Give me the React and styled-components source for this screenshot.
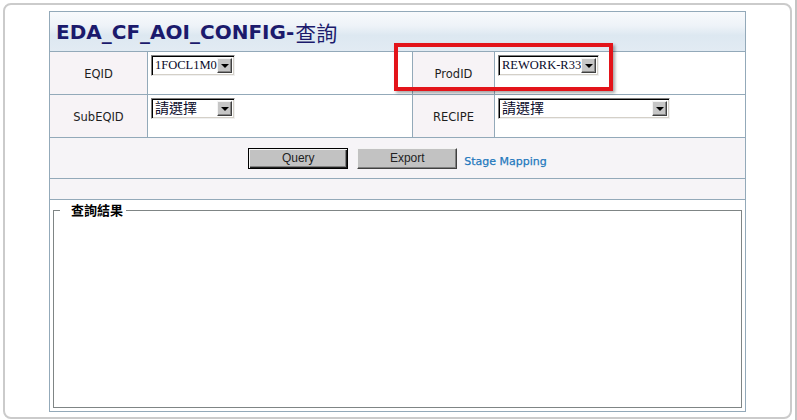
import React from "react";
import styled, { createGlobalStyle } from "styled-components";

const Global = createGlobalStyle`
  html, body { margin: 0; padding: 0; background: #ffffff; }
  body { width: 797px; height: 420px; overflow: hidden; font-family: "DejaVu Sans", Verdana, sans-serif; }
`;

const Page = styled.div`
  display: flex;
  align-items: flex-start;
  width: 797px;
  height: 420px;
`;

const Frame = styled.div`
  box-sizing: border-box;
  margin: 3px 0 0 3px;
  width: 790px;
  height: 416px;
  border: 2px solid #cbcbcb;
  border-radius: 8px;
  background: #ffffff;
  padding: 6px 0 0 44px;
`;

const EdgeStrip = styled.div`
  margin-left: 3px;
  width: 2px;
  height: 420px;
  background: #c4c4c4;
`;

const Panel = styled.div`
  position: relative;
  display: grid;
  grid-template-columns: 97px 264px 81px 250px;
  grid-template-rows: 39px 42px 42px 40px 20px 211px;
  gap: 1px;
  width: max-content;
  background: #93a9b9;
  border: 1px solid #93a9b9;
`;

const TitleCell = styled.div`
  grid-column: 1 / -1;
  display: flex;
  align-items: center;
  padding-left: 6px;
  background: linear-gradient(#f8fafc 0%, #eef3f8 35%, #dde8f1 60%, #e2ebf3 100%);
  color: #1b1a6c;
  font-family: "DejaVu Sans", Verdana, sans-serif;
  font-weight: bold;
  font-size: 20px;
  white-space: nowrap;
`;

const TitleCjk = styled.span`
  font-family: "Noto Sans CJK TC", "Noto Sans CJK SC", sans-serif;
  font-weight: normal;
  font-size: 21px;
  margin-left: 1px;
`;

const LabelCell = styled.div`
  display: flex;
  align-items: center;
  justify-content: center;
  background: #f7f3f6;
  color: #1e1e1e;
  font-size: 11.5px;
  font-family: "DejaVu Sans", Verdana, sans-serif;
  padding-top: 1px;
`;

const ValueCell = styled.div`
  background: #ffffff;
  padding: 3px 0 0 3px;
`;

const SelectBox = styled.div`
  box-sizing: border-box;
  display: flex;
  align-items: center;
  width: ${(p) => p.$w}px;
  height: 21px;
  background: #ffffff;
  border: 1px solid;
  border-color: #808080 #f0f0f0 #f0f0f0 #808080;
  box-shadow: inset 1px 1px 0 #000000, inset -1px -1px 0 #d4d0c8;
  padding: 0 2px 0 3px;
`;

const SelectText = styled.span`
  flex: 1;
  white-space: nowrap;
  color: #0a0a2a;
  font-family: ${(p) =>
    p.$cjk
      ? '"Noto Sans CJK TC", "Noto Sans CJK SC", sans-serif'
      : '"Liberation Serif", "Times New Roman", serif'};
  font-size: ${(p) => (p.$cjk ? "14px" : "12.5px")};
  line-height: normal;
  margin-top: ${(p) => (p.$cjk ? "-3px" : "-1px")};
`;

const ArrowButton = styled.span`
  box-sizing: border-box;
  display: flex;
  flex: none;
  align-items: center;
  justify-content: center;
  width: 15px;
  height: 15px;
  background: #c6c6c6;
  border: 1px solid;
  border-color: #f4f4f4 #404040 #404040 #f4f4f4;
  box-shadow: inset -1px -1px 0 #888888;
`;

const ArrowGlyph = styled.span`
  width: 0;
  height: 0;
  border-left: 4px solid transparent;
  border-right: 4px solid transparent;
  border-top: 4px solid #000000;
  margin-top: 1px;
`;

const Select = ({ w, cjk, children }) => (
  <SelectBox $w={w}>
    <SelectText $cjk={cjk}>{children}</SelectText>
    <ArrowButton>
      <ArrowGlyph />
    </ArrowButton>
  </SelectBox>
);

const ActionCell = styled.div`
  grid-column: 1 / -1;
  display: flex;
  align-items: center;
  justify-content: center;
  gap: 9px;
  background: #f6f4f7;
`;

const Button = styled.button`
  box-sizing: border-box;
  width: 100px;
  height: 21px;
  padding: 0;
  margin: 0;
  background: #c2c2c2;
  color: #222222;
  font-family: "Liberation Sans", Arial, sans-serif;
  font-size: 12px;
  border: 1px solid;
  border-color: ${(p) => (p.$default ? "#000" : "#f4f4f4 #404040 #404040 #f4f4f4")};
  box-shadow: ${(p) =>
    p.$default
      ? "inset 1px 1px 0 #f4f4f4, inset -1px -1px 0 #202020, inset -2px -2px 0 #808080"
      : "inset -1px -1px 0 #808080"};
  cursor: pointer;
`;

const StageLink = styled.a`
  margin: 7px 0 0 -2px;
  color: #2378bd;
  font-family: "DejaVu Sans", Verdana, sans-serif;
  font-size: 11px;
  text-decoration: none;
  -webkit-text-stroke: 0.25px #2378bd;
`;

const SpacerCell = styled.div`
  grid-column: 1 / -1;
  background: #f6f4f7;
`;

const ResultCell = styled.div`
  grid-column: 1 / -1;
  display: flex;
  background: #ffffff;
  padding: 0 3px 3px 3px;
`;

const ResultSet = styled.fieldset`
  flex: 1;
  margin: 0;
  padding: 0;
  border: 1px solid #7f8585;
  min-width: 0;
`;

const ResultLegend = styled.legend`
  margin-left: 6px;
  padding: 0 3px 0 11px;
  line-height: 20px;
  font-family: "Noto Sans CJK TC", "Noto Sans CJK SC", sans-serif;
  font-weight: bold;
  font-size: 13px;
  color: #000000;
`;

const Highlight = styled.div`
  position: absolute;
  left: 344px;
  top: 31px;
  box-sizing: border-box;
  width: 219px;
  height: 48px;
  border: 4px solid #e3141a;
  box-shadow: 2px 2px 3px rgba(0, 0, 0, 0.35);
  pointer-events: none;
`;

export default function App() {
  return (
    <>
      <Global />
      <Page>
        <Frame>
          <Panel>
            <TitleCell>
              EDA_CF_AOI_CONFIG-<TitleCjk>查詢</TitleCjk>
            </TitleCell>

            <LabelCell>EQID</LabelCell>
            <ValueCell>
              <Select w={84}>1FOCL1M0</Select>
            </ValueCell>
            <LabelCell>ProdID</LabelCell>
            <ValueCell>
              <Select w={101}>REWORK-R33</Select>
            </ValueCell>

            <LabelCell>SubEQID</LabelCell>
            <ValueCell>
              <Select w={84} cjk>請選擇</Select>
            </ValueCell>
            <LabelCell>RECIPE</LabelCell>
            <ValueCell>
              <Select w={172} cjk>請選擇</Select>
            </ValueCell>

            <ActionCell>
              <Button $default>Query</Button>
              <Button>Export</Button>
              <StageLink href="#">Stage Mapping</StageLink>
            </ActionCell>

            <SpacerCell />

            <ResultCell>
              <ResultSet>
                <ResultLegend>查詢結果</ResultLegend>
              </ResultSet>
            </ResultCell>

            <Highlight />
          </Panel>
        </Frame>
        <EdgeStrip />
      </Page>
    </>
  );
}
